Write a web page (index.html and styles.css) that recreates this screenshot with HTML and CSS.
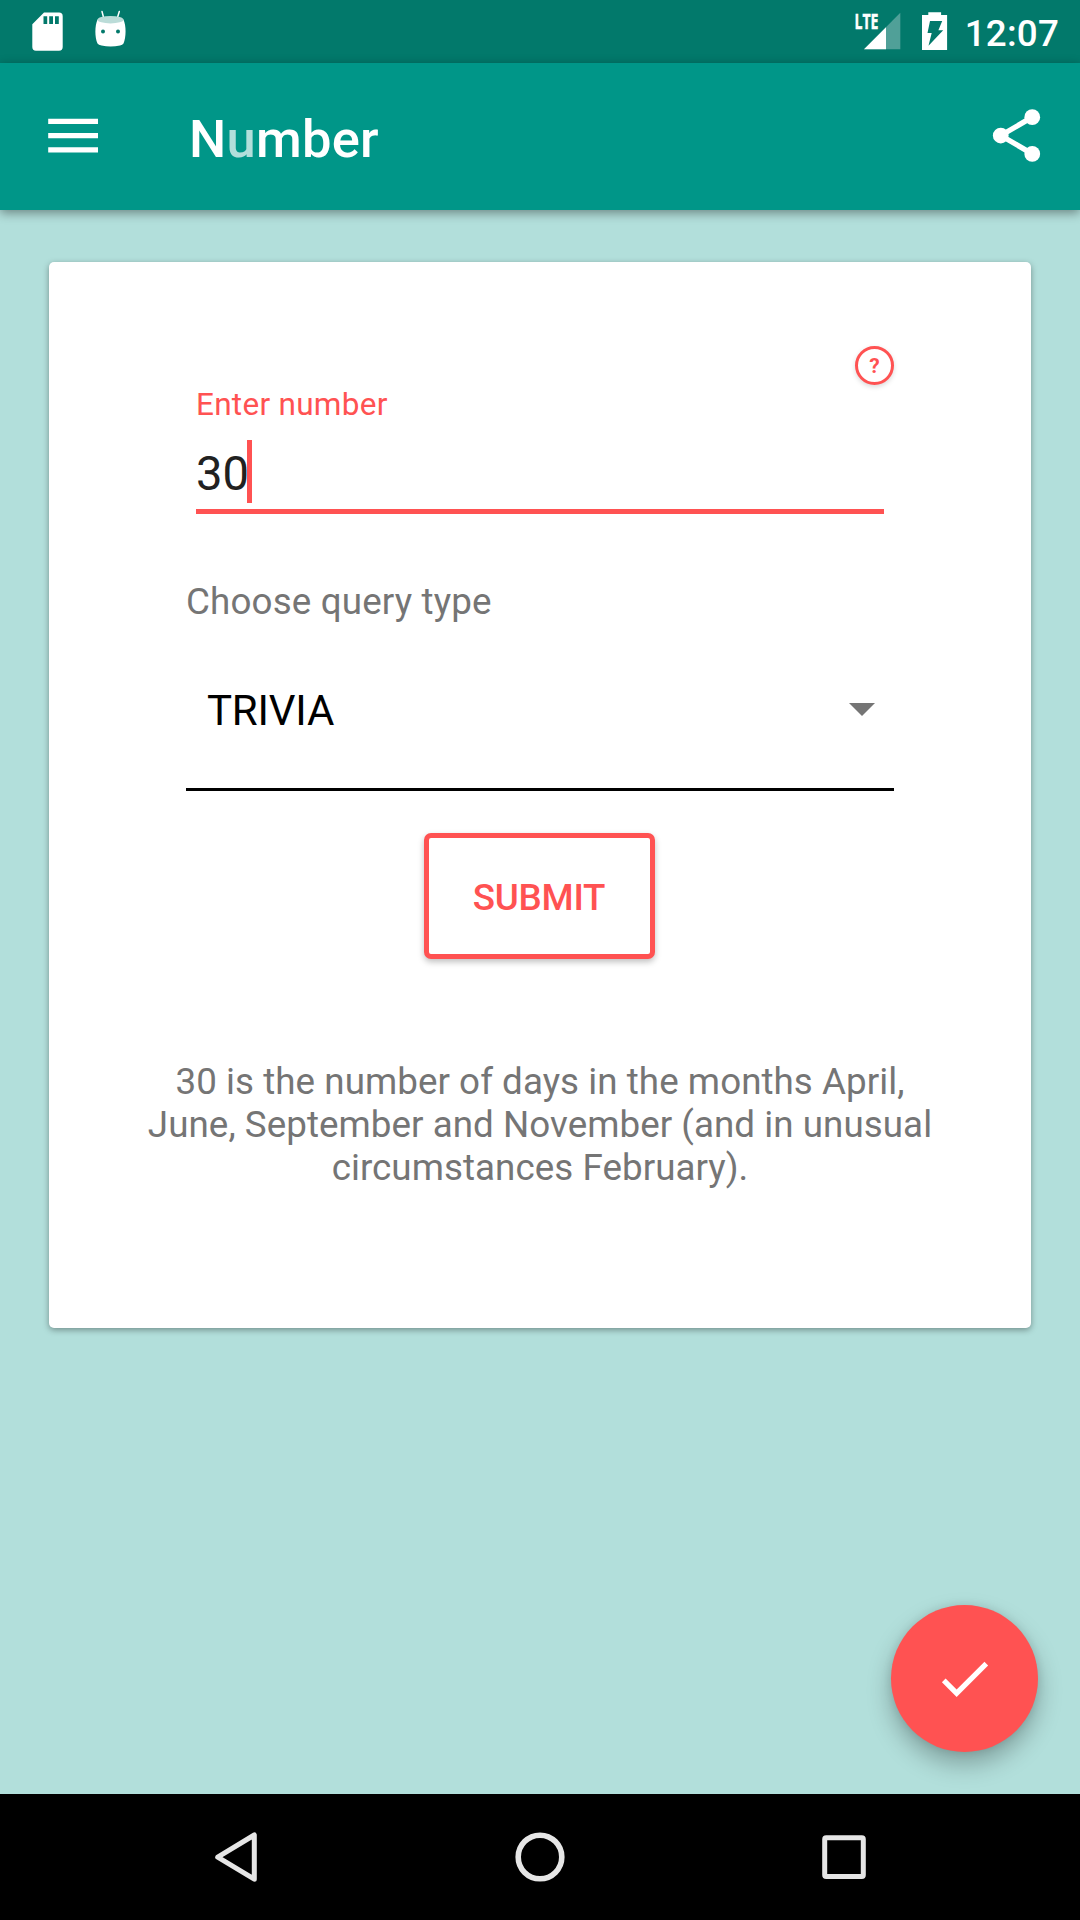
FILE: index.html
```html
<!DOCTYPE html>
<html lang="en">
<head>
<meta charset="utf-8">
<title>Number</title>
<link rel="stylesheet" href="styles.css">
</head>
<body>
<div class="screen">
  <header class="status-bar">
    <svg class="status-left" width="130" height="63" viewBox="0 0 130 63" aria-hidden="true">
      <path fill="#fff" d="M44 12.6H59a3.7 3.7 0 0 1 3.7 3.7V47a3.7 3.7 0 0 1-3.7 3.7H36a3.7 3.7 0 0 1-3.7-3.7V24.3Z"/>
      <path fill="#02796b" d="M43.5 16.3h3.7v7.8h-3.7zM49.2 16.3H53v7.8h-3.8zM55 16.3h3.8v7.8H55z"/>
      <path stroke="#fff" stroke-width="1.5" stroke-linecap="round" d="M102 11.5L103.700 18M119.300 11.5L117.300 18"/>
      <path fill="#fff" d="M97.5 19.5Q110.5 24 123.5 19.5C126.300 26 126.300 37 123.5 43.6Q122.5 45 120 45.5Q110.5 47.5 101.5 45.5Q98.5 45 97.5 43.6C94.700 37 94.700 26 97.5 19.5Z"/>
      <ellipse cx="110.5" cy="19.7" rx="13" ry="3.7" fill="#bbdcd8"/>
      <circle cx="103" cy="31.5" r="2" fill="#02796b"/>
      <circle cx="118" cy="31.5" r="2" fill="#02796b"/>
    </svg>
    <div class="status-right">
      <svg width="100" height="63" viewBox="850 0 100 63" aria-hidden="true">
        <path fill="#50a098" d="M864 49.2L900.3 12.8V49.2Z"/>
        <path fill="#fff" d="M864 49.2L886 27.2V49.2Z"/>
        <text class="lte" x="854.5" y="29" textLength="24" lengthAdjust="spacingAndGlyphs">LTE</text>
        <path fill="#fff" d="M922 15h6.3v-2.8h12.8V15h6v35H922z"/>
        <path fill="#02796b" d="M930 21h12.2l-3.8 9.3h4.8L928.5 45.7l3.2-12.7h-4.2z"/>
      </svg>
      <span class="clock">12:07</span>
    </div>
  </header>

  <div class="app-bar">
    <svg class="menu" width="50" height="35" viewBox="0 0 50 35" aria-label="Menu">
      <path fill="#fff" d="M.2.7H50v5.3H.2zM.2 15H50v5.3H.2zM.2 29.2H50v5.3H.2z"/>
    </svg>
    <h1 class="title">N<span class="title-accent">u</span>mber</h1>
    <svg class="share" width="63" height="63" viewBox="0 0 24 24" aria-label="Share">
      <path fill="none" stroke="#fff" stroke-width="2" d="M18 5L6 12L18 19"/>
      <circle cx="18" cy="5" r="3" fill="#fff"/><circle cx="6" cy="12" r="3" fill="#fff"/><circle cx="18" cy="19" r="3" fill="#fff"/>
    </svg>
  </div>

  <main class="content">
    <section class="card">
      <div class="form">
        <button class="help" type="button">?</button>
        <div class="field">
          <div class="field-label">Enter number</div>
          <div class="field-input"><span>30</span><i class="caret"></i></div>
        </div>
        <div class="select-label">Choose query type</div>
        <div class="select">
          <span>TRIVIA</span>
          <svg class="arrow" width="26" height="13" viewBox="0 0 26 13" aria-hidden="true"><path fill="#757575" d="M0 0H26L13 13Z"/></svg>
        </div>
        <button class="submit" type="button">SUBMIT</button>
      </div>
      <p class="result">30 is the number of days in the months April, June, September and November (and in unusual circumstances February).</p>
    </section>
    <button class="fab" type="button" aria-label="Done">
      <svg width="63" height="63" viewBox="0 0 24 24"><path fill="#fff" d="M9 16.2L4.8 12l-1.4 1.4L9 19 21 7l-1.4-1.4L9 16.2z"/></svg>
    </button>
  </main>

  <nav class="nav-bar">
    <svg width="56" height="56" viewBox="208 1829 56 56" aria-label="Back"><path fill="none" stroke="#e6e6e6" stroke-width="5" stroke-linejoin="round" d="M217.7 1857.2L254.3 1835V1879.2Z"/></svg>
    <svg width="56" height="56" viewBox="512 1829 56 56" aria-label="Home"><circle cx="540" cy="1857" r="21.8" fill="none" stroke="#e6e6e6" stroke-width="5.6"/></svg>
    <svg width="56" height="56" viewBox="816 1829 56 56" aria-label="Recents"><rect x="824.7" y="1837.8" width="38.6" height="38.6" rx="1.5" fill="none" stroke="#e6e6e6" stroke-width="5"/></svg>
  </nav>
</div>
</body>
</html>
```
FILE: styles.css
```css
* {
  box-sizing: border-box;
}

body {
  margin: 0;
  font-family: Roboto, "Noto Sans", sans-serif;
}

button {
  font-family: inherit;
  padding: 0;
}

.screen {
  width: 1080px;
  height: 1920px;
  display: flex;
  flex-direction: column;
  overflow: hidden;
  background: #b2dfdb;
}

.status-bar {
  height: 63px;
  display: flex;
  justify-content: space-between;
  background: #02796b;
}

.status-right {
  display: flex;
  gap: 15px;
  padding-right: 21px;
}

.lte {
  font-family: "Open Sans", sans-serif;
  font-weight: 700;
  font-size: 22px;
  fill: #fff;
  stroke: #fff;
  stroke-width: 0.5px;
}

.clock {
  color: #fff;
  font-size: 36.75px;
  font-weight: 500;
  line-height: 67px;
  letter-spacing: 0.2px;
}

.app-bar {
  position: relative;
  z-index: 1;
  height: 147px;
  display: flex;
  align-items: center;
  padding: 0 32px 0 48px;
  background: #009688;
  box-shadow: 0 3px 10px rgba(0, 0, 0, 0.4);
}

.menu {
  margin-bottom: 2px;
}

.title {
  flex: 1;
  margin: 4px 0 0 91px;
  font-size: 52.5px;
  font-weight: 500;
  line-height: 60px;
  letter-spacing: 0.25px;
  color: #fff;
}

.title-accent {
  color: #b2dfdb;
}

.share {
  margin-bottom: 2px;
}

.content {
  position: relative;
  height: 1584px;
  padding: 52px 49px 0;
}

.card {
  height: 1066px;
  padding-top: 84px;
  background: #fff;
  border-radius: 5px;
  box-shadow: 0 2px 6px rgba(0, 0, 0, 0.36);
}

.form {
  display: flex;
  flex-direction: column;
  padding: 0 137px;
}

.help {
  align-self: flex-end;
  width: 39px;
  height: 39px;
  border: 3px solid #ff5252;
  border-radius: 50%;
  background: #fff;
  color: #ff5252;
  font-size: 21px;
  font-weight: 700;
  line-height: 34px;
  box-shadow: 0 2px 5px rgba(0, 0, 0, 0.15);
}

.field {
  padding: 0 10px;
}

.field-label {
  color: #ff5252;
  font-size: 31.5px;
  line-height: 40px;
  letter-spacing: 0.28px;
}

.field-input {
  display: flex;
  height: 74px;
  margin-top: 15px;
  border-bottom: 5px solid #ff5252;
  color: #212121;
  font-size: 47.25px;
  line-height: 69px;
}

.caret {
  width: 5px;
  height: 63px;
  margin-left: -2px;
  background: #ff5252;
}

.select-label {
  margin-top: 66px;
  color: #757575;
  font-size: 36.75px;
  line-height: 43px;
  letter-spacing: 0.15px;
}

.select {
  display: flex;
  align-items: center;
  justify-content: space-between;
  height: 168px;
  padding: 10px 19px 0 21px;
  border-bottom: 3px solid #000;
  color: #000;
  font-size: 42px;
  line-height: 48px;
  letter-spacing: -0.2px;
}

.arrow {
  margin-bottom: 2px;
}

.submit {
  align-self: center;
  width: 231px;
  height: 126px;
  margin: 42px 1px 0 0;
  padding: 2px 1px 0 0;
  border: 5px solid #ff5252;
  border-radius: 7px;
  background: #fff;
  color: #ff5252;
  font-size: 36.75px;
  font-weight: 500;
  letter-spacing: -0.25px;
  box-shadow: 0 3px 6px rgba(0, 0, 0, 0.25);
}

.result {
  margin: 101px 0 0;
  padding: 0 95px;
  color: #757575;
  font-size: 36.75px;
  line-height: 43px;
  letter-spacing: 0.05px;
  text-align: center;
}

.fab {
  position: absolute;
  right: 42px;
  bottom: 42px;
  width: 147px;
  height: 147px;
  display: flex;
  align-items: center;
  justify-content: center;
  border: 0;
  border-radius: 50%;
  background: #ff5252;
  box-shadow: 0 12px 24px rgba(0, 0, 0, 0.28), 0 0 8px rgba(0, 0, 0, 0.1);
}

.nav-bar {
  height: 126px;
  display: flex;
  align-items: center;
  justify-content: space-between;
  padding: 0 208px;
  background: #000;
}
```
